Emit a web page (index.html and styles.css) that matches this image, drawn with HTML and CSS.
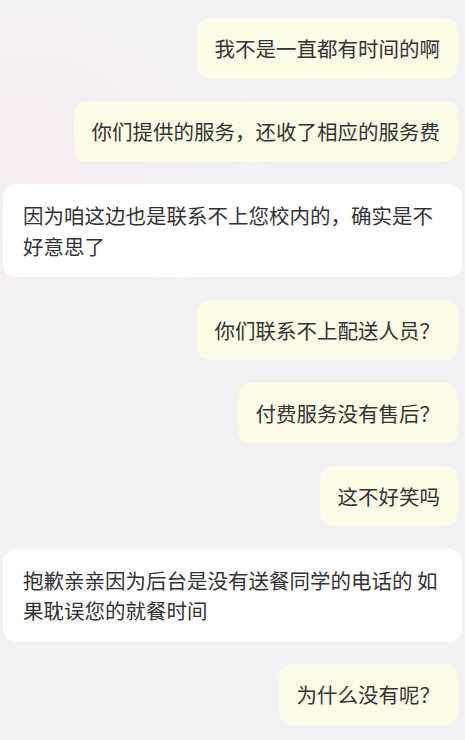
FILE: index.html
```html
<!DOCTYPE html>
<html lang="zh-CN">
<head>
  <meta charset="UTF-8" />
  <meta name="viewport" content="width=device-width, initial-scale=1" />
  <title>客服对话</title>
  <link rel="stylesheet" href="styles.css">
</head>
<body>

  <div class="chat">
    <div class="msg msg-me">我不是一直都有时间的啊</div>
    <div class="msg msg-me">你们提供的服务，还收了相应的服务费</div>
    <div class="msg msg-shop">因为咱这边也是联系不上您校内的，确实是不好意思了</div>
    <div class="msg msg-me">你们联系不上配送人员？</div>
    <div class="msg msg-me">付费服务没有售后？</div>
    <div class="msg msg-me">这不好笑吗</div>
    <div class="msg msg-shop">抱歉亲亲因为后台是没有送餐同学的电话的 如果耽误您的就餐时间</div>
    <div class="msg msg-me">为什么没有呢？</div>
  </div>

</body>
</html>
```

FILE: styles.css
```css
body {
  margin: 0;
  font-family: "Noto Sans CJK SC", "Noto Sans", sans-serif;
  background-color: #f2f2f4;
  background-image: radial-gradient(ellipse 260px 200px at 20px 150px, #f7edf1, rgba(242,242,244,0));
  min-height: 740px;
}

.chat {
  display: flex;
  flex-direction: column;
  gap: 22.5px;
  padding: 18px 7px 18px 3px;
}

.msg {
  font-size: 20.5px;
  line-height: 30.5px;
  color: #333333;
  border-radius: 13px;
}

.msg-me {
  align-self: flex-end;
  background-color: #fcfbe5;
  padding: 15px 18px;
}

.msg-shop {
  align-self: stretch;
  margin-right: -4px;
  background-color: #ffffff;
  padding: 16px 20px;
}
```
